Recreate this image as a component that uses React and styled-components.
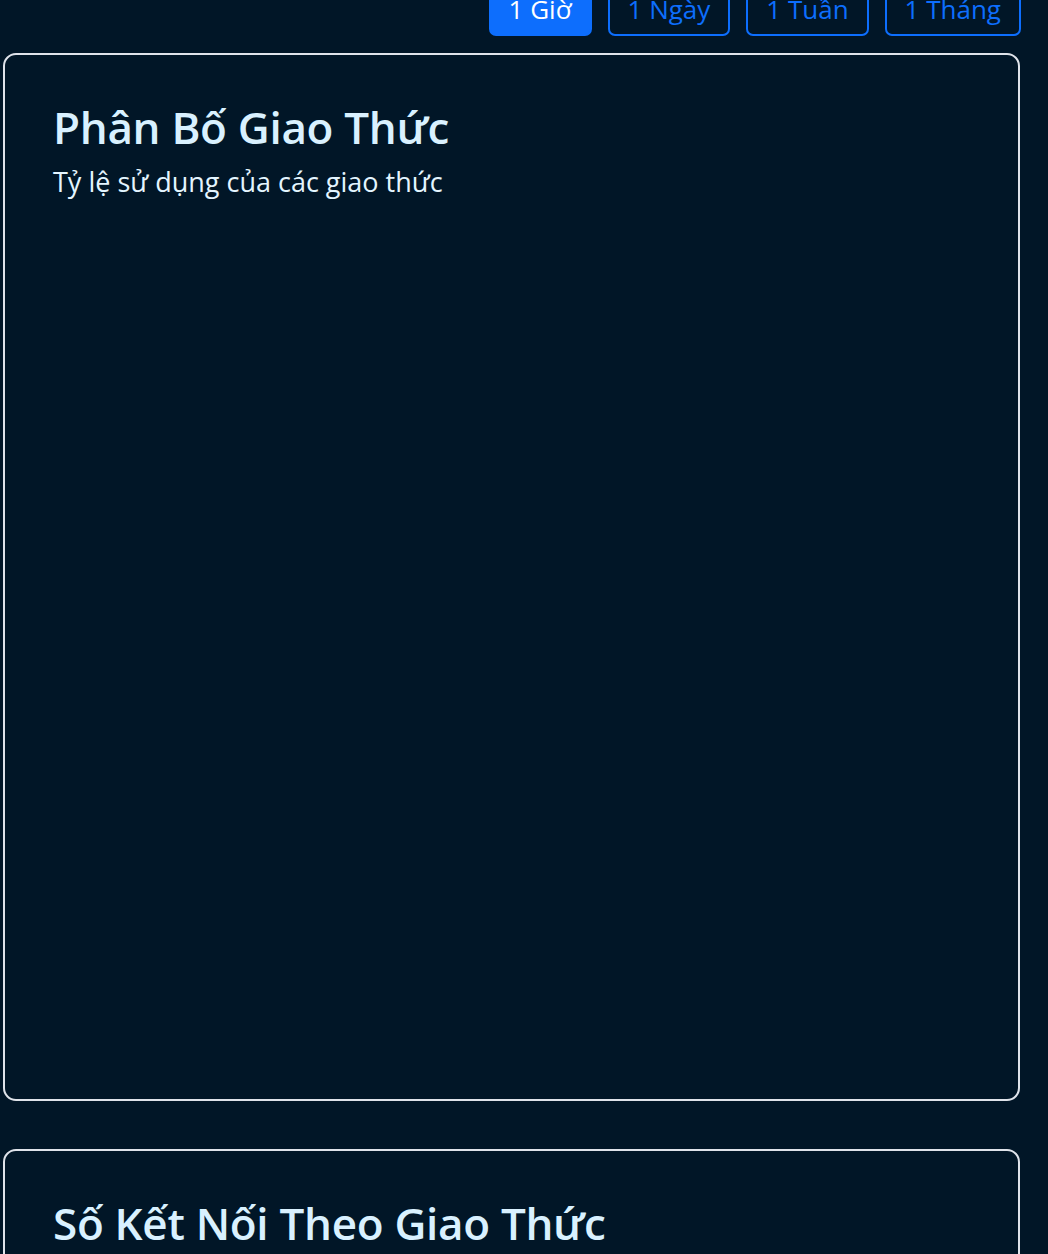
import React from "react";
import styled, { createGlobalStyle } from "styled-components";

const GlobalStyle = createGlobalStyle`
  html, body {
    margin: 0;
    padding: 0;
    background: #011627;
    overflow: hidden;
  }
  body {
    font-family: "Open Sans", "Noto Sans", "Liberation Sans", sans-serif;
    color: #d6eeff;
  }
  * { box-sizing: border-box; }
`;

const Page = styled.div`
  width: 1048px;
  padding: 0 28px 0 3px;
  display: flex;
  flex-direction: column;
`;

const Toolbar = styled.div`
  display: flex;
  justify-content: flex-end;
  gap: 16px;
  margin-top: -18px;
  margin-bottom: 17px;
  margin-right: -1px;
`;

const RangeButton = styled.button`
  font-family: inherit;
  font-size: 26px;
  line-height: 36px;
  height: 54px;
  padding: 0 18px;
  border-radius: 7px;
  border: 2px solid #0d6efd;
  background: ${(p) => (p.$active ? "#0d6efd" : "transparent")};
  color: ${(p) => (p.$active ? "#ffffff" : "#0d6efd")};
  cursor: pointer;
`;

const Card = styled.section`
  border: 2px solid #dfe3ea;
  border-radius: 13px;
  padding: 45px 48px 48px;
  display: flex;
  flex-direction: column;
  margin-bottom: 48px;
`;

const Title = styled.h2`
  margin: 0;
  font-size: 44px;
  font-weight: 600;
  line-height: 54px;
  color: #d9f1ff;
  letter-spacing: -0.3px;
`;

const Subtitle = styled.p`
  margin: 10px 0 0;
  font-size: 27px;
  line-height: 36px;
  color: #e4f5ff;
`;

const ChartArea = styled.div`
  height: ${(p) => p.$h}px;
`;

const ranges = [
  { label: "1 Giờ", active: true },
  { label: "1 Ngày" },
  { label: "1 Tuần" },
  { label: "1 Tháng" },
];

export default function App() {
  return (
    <>
      <GlobalStyle />
      <Page>
        <Toolbar>
          {ranges.map((r) => (
            <RangeButton key={r.label} $active={r.active}>
              {r.label}
            </RangeButton>
          ))}
        </Toolbar>
        <Card>
          <Title>Phân Bố Giao Thức</Title>
          <Subtitle>Tỷ lệ sử dụng của các giao thức</Subtitle>
          <ChartArea $h={851} />
        </Card>
        <Card>
          <Title>Số Kết Nối Theo Giao Thức</Title>
          <Subtitle>Số lượng kết nối đang hoạt động</Subtitle>
          <ChartArea $h={851} />
        </Card>
      </Page>
    </>
  );
}
